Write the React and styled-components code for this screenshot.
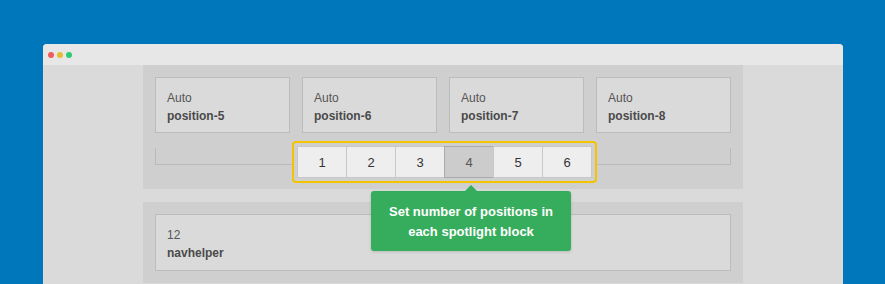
import React from "react";
import styled, { createGlobalStyle } from "styled-components";

const Global = createGlobalStyle`
    html, body {
        margin: 0;
        padding: 0;
        background: #0077bb;
        font-family: "Liberation Sans", Arial, sans-serif;
        overflow: hidden;
    }
`

const positions = ["position-5", "position-6", "position-7", "position-8"];
const pages = [1, 2, 3, 4, 5, 6];

const App = () => {
    return (
        <>
            <Global />
            <Window>
                <TitleBar>
                    <Dot color="#ee5c5c" />
                    <Dot color="#e8bb35" />
                    <Dot color="#2ecc71" />
                </TitleBar>
                <Content>
                    <Panel bottom={24}>
                        <CardRow>
                            {positions.map((p) => (
                                <Card key={p}>
                                    <span className="label">Auto</span>
                                    <span className="name">{p}</span>
                                </Card>
                            ))}
                        </CardRow>
                        <Bracket>
                            <Paginator>
                                {pages.map((n) => (
                                    <PageButton key={n} active={n === 4}>{n}</PageButton>
                                ))}
                                <Tooltip>
                                    Set number of positions in<br />each spotlight block
                                </Tooltip>
                            </Paginator>
                        </Bracket>
                    </Panel>
                    <Panel bottom={12}>
                        <Card wide>
                            <span className="label">12</span>
                            <span className="name">navhelper</span>
                        </Card>
                    </Panel>
                </Content>
            </Window>
        </>
    );
}

export default App;

const Window = styled.div`
    margin: 44px 0 0 43px;
    width: 800px;
    height: 240px;
    border-radius: 4px 4px 0 0;
    overflow: hidden;
    background: #dadada;
`
const TitleBar = styled.div`
    height: 21px;
    background: #e7e7e7;
    display: flex;
    align-items: center;
    gap: 3px;
    padding-left: 5px;
`
const Dot = styled.span`
    width: 6px;
    height: 6px;
    border-radius: 50%;
    background: ${(p) => p.color};
`
const Content = styled.div`
    display: flex;
    flex-direction: column;
    align-items: center;
    gap: 13px;
`
const Panel = styled.section`
    width: 600px;
    box-sizing: border-box;
    background: #cfcfcf;
    padding: 12px 12px ${(p) => p.bottom}px;
`
const CardRow = styled.div`
    display: grid;
    grid-template-columns: repeat(4, 135px);
    gap: 12px;
`
const Card = styled.div`
    box-sizing: border-box;
    height: ${(p) => (p.wide ? 57 : 56)}px;
    border: 1px solid #bcbcbc;
    background: #dadada;
    padding: 11px 11px;
    display: flex;
    flex-direction: column;
    font-size: 12px;
    line-height: 18px;
    color: #555;
    .name {
        font-weight: bold;
        color: #4a4a4a;
    }
`
const Bracket = styled.div`
    position: relative;
    margin-top: 15px;
    height: 16px;
    border: 1px solid #bababa;
    border-top: none;
`
const Paginator = styled.div`
    position: absolute;
    top: -7px;
    left: 136px;
    display: flex;
    padding: 3px;
    border: 2px solid #f5c400;
    border-radius: 4px;
    background: #cfcfcf;
`
const PageButton = styled.div`
    width: 50px;
    height: 32px;
    box-sizing: border-box;
    display: flex;
    align-items: center;
    justify-content: center;
    font-size: 13px;
    color: ${(p) => (p.active ? "#555" : "#333")};
    background: ${(p) => (p.active ? "#cccccc" : "#eeeeee")};
    border: 1px solid ${(p) => (p.active ? "#aaaaaa" : "#c8c8c8")};
    margin-left: -1px;
    &:first-child {
        margin-left: 0;
    }
`
const Tooltip = styled.div`
    position: absolute;
    top: 48px;
    left: 77px;
    width: 200px;
    box-sizing: border-box;
    padding: 11px 10px 9px;
    background: #36ad5c;
    border-radius: 3px;
    box-shadow: 0 1px 3px rgba(0, 0, 0, 0.15);
    color: #fff;
    font-size: 13px;
    font-weight: bold;
    line-height: 20px;
    text-align: center;
    &::before {
        content: "";
        position: absolute;
        top: -6px;
        left: 94px;
        border-left: 6px solid transparent;
        border-right: 6px solid transparent;
        border-bottom: 6px solid #36ad5c;
    }
`
